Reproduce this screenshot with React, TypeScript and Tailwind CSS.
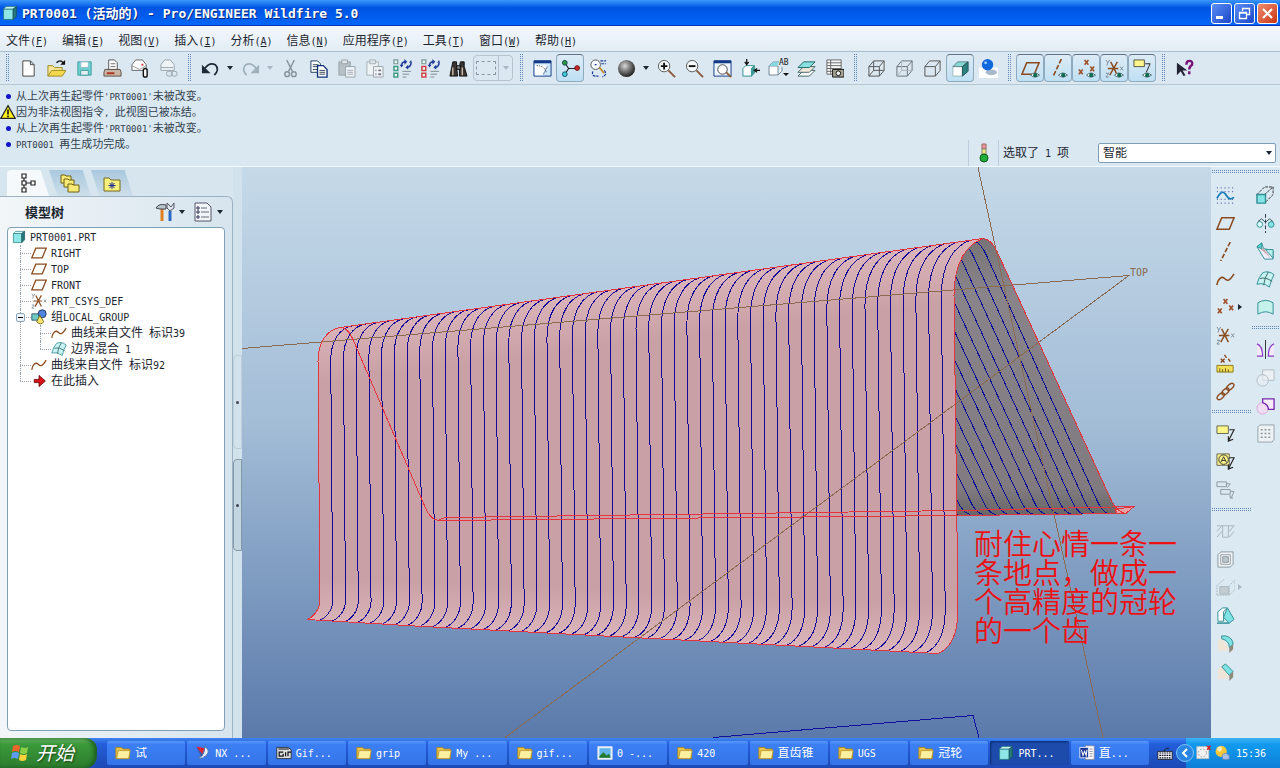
import { Fragment, type ReactNode } from "react"
import clsx from "clsx"

const BROWN = "#8a4a20"
const TEAL = "#2f8f94"

const eye = (
  <>
    <path d="M10 17q4.5-4.5 9.5 0q-5 4-9.5 0z" fill="#fff" stroke="#4a6a6a" />
    <circle cx="15" cy="17" r="2.2" fill="#0d6a52" />
  </>
)
const csys = (
  <>
    <path d="M3 10h11M6 3l7 14M13 3L5 17" stroke={BROWN} strokeWidth="1.5" />
    <path d="M1 1l2 3l2-3M3 4l-1 3M16 8l3 4m0-4l-3 4M1 15h3l-3 4h3" stroke="#7c8a96" />
  </>
)
const crosses = <path d="M8 1l4 5m0-5l-4 5M2 11l4 5m0-5l-4 5M14 8l4 5m0-5l-4 5" stroke="#a05028" strokeWidth="1.7" />
const plane = <path d="M6 4h13l-5 12H1z" stroke={BROWN} strokeWidth="1.6" />
const wave = <path d="M1 16C2 9 6 6 9 9s5 3 10-5" stroke={BROWN} strokeWidth="1.6" />
const regenBoxes = (color: string) => (
  <>
    <path d="M1 1h4v4H1z" fill="#e6f5f2" stroke="#7b9a98" strokeWidth="1.3" />
    <path d="M1 8h4v4H1zM1 15h4v4H1z" fill="#f2fbf9" stroke={color} strokeWidth="1.6" />
    <path d="M10 13h9M10 16h7M10 19h4" stroke="#7d8a92" />
    <path d="M9 7q0-4 4-4M19 4q0 4-4 5" stroke="#1b3a9a" strokeWidth="1.6" />
    <path d="M12 0l3 3l-3 3zM7 6h4l-2 3zM16 6v5l-3-2zM17 4h3l-1-3z" fill="#1b3a9a" />
  </>
)
const magnifier = (
  <>
    <circle cx="7.5" cy="7.5" r="6" fill="#f5fafc" stroke="#555" />
    <path d="M12 12l7 7" stroke="#8a5a3a" strokeWidth="2" />
  </>
)
const wireCube = <path d="M2 8h11v10H2zM7 2h11v10M2 8l5-6M13 8l5-6M13 18l5-6" />
const clipboard = (
  <>
    <path d="M2 3h12v14H2z" fill="#b7c0c6" stroke="#98a2a8" />
    <path d="M5 1h6v4H5z" fill="#dde5ea" stroke="#98a2a8" />
    <path d="M9 8h10v11H9z" fill="#edf3f7" stroke="#98a2a8" />
  </>
)
const noteArrow = <path d="M14 6h5l-6 12M13 13v5l5-2" stroke="#222" strokeWidth="1.2" />

const ICONS: Record<string, ReactNode> = {
  new: <path d="M4 2h8l4 4v12H4zM12 2v4h4" fill="#fff" stroke="#444" />,
  open: (
    <>
      <path d="M1 18V7h5l2 2h8v3" fill="#f6e79a" stroke="#a08a1c" />
      <path d="M1 18l4-6h15l-4 6z" fill="#f4d84e" stroke="#a08a1c" />
      <path d="M10 4q4-4 7 0" stroke="#111" strokeWidth="1.5" />
      <path d="M19 1v5h-5z" fill="#111" />
    </>
  ),
  save: (
    <>
      <path d="M3 3h14v14H3z" fill="#6fd0cf" stroke="#3f9ea2" />
      <path d="M6 3h8v6H6z" fill="#fff" stroke="#8bc" />
      <path d="M6 12h8v5H6z" fill="#e8eff2" stroke="#3f9ea2" />
    </>
  ),
  print: (
    <>
      <path d="M6 11V1h6l3 3v7z" fill="#fff" stroke="#555" />
      <path d="M8 5h5M8 8h5" stroke="#666" />
      <path d="M2 11h16l1 3v4H1v-4z" fill="#c9b5a5" stroke="#5e5048" />
      <path d="M4 15h8" stroke="#b03020" strokeWidth="2" />
    </>
  ),
  mail: (
    <>
      <path d="M1 12V6l4-5h7l4 5v6z" fill="#fff" stroke="#666" />
      <path d="M1 7l8 4l7-4" stroke="#999" />
      <rect x="13" y="10" width="4" height="9" rx="2" fill="#fff" stroke="#111" strokeWidth="1.5" />
      <path d="M11 6h2" stroke="#c33" strokeWidth="2" />
    </>
  ),
  mailLink: (
    <g stroke="#9aa5ac">
      <path d="M2 12V6l4-5h6l4 5v6z" fill="#eef3f6" />
      <path d="M2 9h13" />
      <rect x="8" y="13" width="6" height="5" rx="2" />
      <rect x="13" y="13" width="6" height="5" rx="2" />
    </g>
  ),
  undo: (
    <>
      <path d="M4 10q5-7 11-4q5 5-1 11" stroke="#1d2c38" strokeWidth="1.8" />
      <path d="M1 6v9h9z" fill="#1d2c38" />
    </>
  ),
  redo: (
    <>
      <path d="M16 10q-5-7-11-4q-5 5 1 11" stroke="#9fb0bb" strokeWidth="1.8" />
      <path d="M19 6v9h-9z" fill="#9fb0bb" />
    </>
  ),
  cut: (
    <g stroke="#87929a" strokeWidth="1.5">
      <path d="M6 1l6 12M14 1L8 13" />
      <circle cx="6.500" cy="16" r="2.500" />
      <circle cx="13.500" cy="16" r="2.500" />
    </g>
  ),
  copy: (
    <>
      <path d="M2 2h7l3 3v9H2z" fill="#fff" stroke="#223a60" />
      <path d="M4 6h6M4 8h6M4 11h6" stroke="#345" />
      <path d="M9 7h6l4 4v8H9z" fill="#fff" stroke="#10307a" strokeWidth="1.4" />
      <path d="M11 12h6M11 14h6M11 16h6" stroke="#345" />
    </>
  ),
  paste: (
    <>
      {clipboard}
      <path d="M11 12h6M11 14h6M11 16h6" stroke="#aab" />
    </>
  ),
  pasteSpecial: (
    <>
      <path d="M2 3h12v14H2z" fill="#eef3f6" stroke="#a5afb5" />
      <path d="M5 1h6v4H5z" fill="#dde5ea" stroke="#a5afb5" />
      <path d="M9 8h10v11H9z" fill="#f3f7fa" stroke="#98a2a8" />
      <path d="M11 12h1M14 12h3M11 16h1M14 16h3" stroke="#778" strokeWidth="2" />
    </>
  ),
  regen: regenBoxes("#3f9a86"),
  regenRed: regenBoxes("#cc4444"),
  find: (
    <>
      <path d="M4 3h4v5l1 10H1L3 8zM12 3h4v5l3 10h-8V8z" fill="#3a3430" stroke="#111" />
      <path d="M8 7h4v4H8z" fill="#777" stroke="#111" />
      <path d="M4 9v8M14 9v8" stroke="#c9b9a8" strokeWidth="1.5" />
    </>
  ),
  repaint: (
    <>
      <path d="M1 2h18v16H1z" fill="#cfe6fa" stroke="#123a86" />
      <path d="M1 3h18" stroke="#123a86" strokeWidth="3" />
      <path d="M2 6h13l-5 11H2z" fill="#fff" />
      <path d="M4 7q9 0 10 8M15 8l-4 8" stroke="#234" strokeDasharray="1 1" />
    </>
  ),
  spin: (
    <>
      <path d="M4 4l4 6L4 16M8 10h9" stroke="#222" strokeWidth="1.2" />
      <circle cx="4" cy="4" r="2.500" fill="#2c9a3a" stroke="#145" />
      <circle cx="4" cy="16" r="2.500" fill="#44c9cf" stroke="#157" />
      <circle cx="17" cy="9.500" r="2.500" fill="#d02828" stroke="#611" />
    </>
  ),
  orient: (
    <>
      <circle cx="7" cy="6" r="5" fill="#f5fafc" stroke="#555" />
      <path d="M11 9l5 6" stroke="#c09030" strokeWidth="2" />
      <path d="M12 2h6M13 5h5M4 13q-2 6 6 5M16 12q4 4-2 7M6 6h2" stroke="#1b3a9a" strokeWidth="1.3" strokeDasharray="3 1" />
    </>
  ),
  sphere: <circle cx="10" cy="10" r="9" fill="url(#ball)" />,
  zoomIn: (
    <>
      {magnifier}
      <path d="M4 7.500h7M7.500 4v7" stroke="#111" strokeWidth="2" />
    </>
  ),
  zoomOut: (
    <>
      {magnifier}
      <path d="M4 7.500h7" stroke="#111" strokeWidth="2" />
    </>
  ),
  refit: (
    <>
      <path d="M1 2h18v16H1z" fill="#eef6fc" stroke="#123a86" />
      <path d="M1 3h18" stroke="#123a86" strokeWidth="3" />
      <circle cx="10" cy="11" r="5" fill="#fff" stroke="#444" />
      <path d="M14 14l5 5" stroke="#8a5a3a" strokeWidth="2" />
    </>
  ),
  orientView: (
    <>
      <path d="M2 10l3-3h9l-3 3v8H2zM11 10l3-3v8l-3 3" fill="#fff" stroke={TEAL} />
      <path d="M11 10l3-3v8l-3 3z" fill="#3a9a94" />
      <path d="M6 0v6M4 3l2 3l2-3M20 12h-6M17 10l-3 2l3 2" stroke="#111" strokeWidth="1.3" />
    </>
  ),
  layers: (
    <>
      <path d="M7 12h12l-6 6H1z" fill="#fff" stroke="#466" />
      <path d="M7 8h12l-6 6H1z" fill="#f1e6da" stroke="#466" />
      <path d="M7 3h12l-6 6H1z" fill="#8adfe0" stroke="#266" />
    </>
  ),
  viewManager: (
    <>
      <path d="M2 1h15v15H2zM2 4h15M2 7h15M2 10h15M2 13h15M6 1v15" fill="#f8fafb" stroke="#666" />
      <path d="M8 11h12v8H8z" fill="#a9a493" stroke="#111" />
      <circle cx="14" cy="15" r="2.500" fill="#eee" stroke="#111" />
    </>
  ),
  wireframe: <g stroke="#555">{wireCube}<path d="M2 18l5-6h11M7 12V2" /></g>,
  hidden: <g stroke="#6a7076">{wireCube}<path d="M2 18l5-6h11M7 12V2" stroke="#a9b2b8" /></g>,
  noHidden: <path d="M2 8h11v10H2zM2 8l5-6h11v10l-5 6M13 8l5-6" stroke="#555" />,
  shading: (
    <>
      <path d="M2 8h10v10H2z" fill="#fff" stroke="#9bb" />
      <path d="M2 8l5-5h11l-6 5z" fill="#86d6d2" stroke="#688" />
      <path d="M12 8l6-5v10l-6 5z" fill="#2b817d" stroke="#255" />
    </>
  ),
  realism: (
    <>
      <path d="M0 9h20v11H0z" fill="#fff" />
      <ellipse cx="13" cy="14" rx="6" ry="3" fill="#a9b9cc" />
      <circle cx="9" cy="6" r="6" fill="#0f68dc" />
      <circle cx="7" cy="4" r="1.500" fill="#9fd0ff" />
    </>
  ),
  planeEye: <>{plane}{eye}</>,
  axisEye: <><path d="M13 0L4 19" stroke={BROWN} strokeWidth="1.7" strokeDasharray="5 2" />{eye}</>,
  pointEye: <>{crosses}{eye}</>,
  csysEye: <>{csys}{eye}</>,
  noteEye: (
    <>
      <path d="M1 1h11v7H1z" fill="#fbf58a" stroke="#554" />
      <path d="M13 5h5l-4 9" stroke="#222" />
      {eye}
    </>
  ),
  help: (
    <>
      <path d="M2 4v13l4-4l3 5l2-1l-3-5h5z" fill="#223" />
      <path d="M12 6q0-4 3-4q4 0 3 4q-3 2-3 5M15 13v3" stroke="#7a1478" strokeWidth="2.5" />
    </>
  ),
  sketch: (
    <>
      <path d="M1 2h18M1 6h18M1 14h18M1 18h18" stroke="#223a8a" strokeDasharray="1 3" />
      <path d="M1 13C5 5 8 5 11 10s5 4 8 2" stroke="#1679b8" strokeWidth="1.8" />
    </>
  ),
  plane,
  axis: <path d="M15 0L5 20" stroke={BROWN} strokeWidth="1.7" strokeDasharray="5 2" />,
  curve: wave,
  points: crosses,
  csys,
  fieldPoint: (
    <>
      <path d="M5 5l4 4m0-4l-4 4M9 1l2 3M13 5l2 3" stroke={BROWN} strokeWidth="1.5" />
      <path d="M1 12h17v7H1z" fill="#f3e05a" stroke="#8d7a18" />
      <path d="M4 15v4M7 16v3M10 15v4M13 16v3" stroke="#6b5c10" />
    </>
  ),
  chain: (
    <g stroke={BROWN} strokeWidth="1.5">
      <ellipse cx="5" cy="15" rx="4.500" ry="2.500" transform="rotate(-42 5 15)" />
      <ellipse cx="10" cy="10" rx="4.500" ry="2.500" transform="rotate(-42 10 10)" />
      <ellipse cx="15" cy="5" rx="4.500" ry="2.500" transform="rotate(-42 15 5)" />
    </g>
  ),
  note: <><path d="M1 2h12v8H1z" fill="#fbf58a" stroke="#665" />{noteArrow}</>,
  noteA: (
    <>
      <path d="M1 2h13v12H1z" fill="#fbf58a" stroke="#665" />
      <circle cx="8" cy="8" r="5" stroke="#333" />
      <path d="M5 11l3-6l3 6M6 9h4" stroke="#333" />
      {noteArrow}
    </>
  ),
  noteGray: <path d="M1 2h10v5H1zM5 10h10v5H5zM11 4h4l-3 4M15 12h4l-3 7M15 16v3h3" stroke="#8c979f" />,
  hole: <path d="M1 4h18M7 4v12h6V4M1 10l5-6M1 16l5-6M14 10l5-6M14 16l5-6" stroke="#a9b3ba" />,
  shell: (
    <g stroke="#8c979f">
      <path d="M2 5l3-3h13v13l-3 3H2z" fill="#edf3f5" />
      <path d="M5 5h10v10H5z" fill="#fff" />
      <path d="M7 7h6v6H7z" fill="#bcc7cd" />
    </g>
  ),
  rib: (
    <g stroke="#adb7bd">
      <path d="M1 18V8L9 1M1 18h13l6-6V2L14 8v10" strokeDasharray="2 1" />
      <path d="M4 9h9v8H4z" fill="#c2ccd2" />
    </g>
  ),
  draft: (
    <>
      <path d="M2 6l5-4h5l-4 4v10H2z" fill="#fff" stroke={TEAL} />
      <path d="M8 12l4-10l7 12l-5 4z" fill="#7fe3e6" stroke={TEAL} />
      <path d="M1 18h13" stroke={TEAL} strokeWidth="1.5" />
    </>
  ),
  round: (
    <>
      <path d="M2 7l5-5h4l-4 5q6 2 6 11H2z" fill="#eee5d8" />
      <path d="M6 2h4q8 2 8 9l-4 3q0-7-8-9z" fill="#7fe3e6" stroke={TEAL} />
      <path d="M14 14l4-3v5l-4 4z" fill="#908878" />
    </>
  ),
  chamfer: (
    <>
      <path d="M2 7l5-5h4l2 16H2z" fill="#eee5d8" />
      <path d="M6 5l4-3l8 8l-4 4z" fill="#7fe3e6" stroke={TEAL} />
      <path d="M14 14l4-4v6l-4 4z" fill="#908878" />
    </>
  ),
  extrude: (
    <>
      <path d="M1 9l8-8h9v8l-8 8M9 9l9-8" stroke="#333" strokeDasharray="3 1" />
      <path d="M1 9h9v9H1z" fill="#84e4e6" stroke={TEAL} strokeWidth="1.5" />
    </>
  ),
  revolve: (
    <>
      <path d="M10 0v20" stroke="#234" strokeDasharray="4 2" />
      <circle cx="4" cy="11" r="3" fill="#dff" stroke={TEAL} />
      <circle cx="16" cy="11" r="3" fill="#84e4e6" stroke={TEAL} />
      <path d="M2 8l4-3l4 4l4-4l4 3" stroke="#355" />
    </>
  ),
  sweep: (
    <>
      <path d="M1 5l5-4l2 6l10 2v9H9z" fill="#eef" stroke={TEAL} />
      <path d="M3 6l5 1l8 10z" fill="#c9a9aa" />
      <path d="M1 5l5-4v6z" fill="#4fdccf" stroke={TEAL} />
      <path d="M10 8h8v9z" fill="#b9f1ee" stroke={TEAL} />
    </>
  ),
  blend: (
    <>
      <path d="M7 3q6-3 12 2q-3 5-5 13q-6-5-13-3q2-8 6-12z" fill="#c9f3f3" stroke={TEAL} />
      <path d="M4 9q6-2 13 3M13 2q-4 6-5 14" stroke="#366" />
    </>
  ),
  style: <path d="M2 5q8-5 16 0v12q-8-5-16 0z" fill="#c4f1ea" stroke={TEAL} />,
  mirror: (
    <>
      <path d="M10 0v20" stroke="#333" />
      <path d="M1 4q6 2 6 13H1M19 4q-6 2-6 13h6" fill="#f4e8fb" stroke="#8a3fc0" strokeWidth="1.3" />
    </>
  ),
  merge: (
    <g stroke="#b3bcc3" fill="#eaf0f4">
      <path d="M7 2h12v11H7z" />
      <circle cx="7" cy="13" r="6" fillOpacity=".6" />
    </g>
  ),
  trim: (
    <>
      <circle cx="7" cy="13" r="6" fill="#f0dcf2" stroke="#d9a8dc" />
      <path d="M7 3h12v11h-6q0-5-6-7z" fill="#f6ecfb" stroke="#7a28b0" strokeWidth="1.4" />
    </>
  ),
  pattern: (
    <>
      <path d="M2 3l2-2h15v15l-2 3H2z" fill="#edf2f4" stroke="#98a2a8" />
      <path d="M5 6h11M5 10h11M5 14h11" stroke="#8a959c" strokeWidth="1.5" strokeDasharray="2 2" />
    </>
  ),
  part: (
    <>
      <path d="M2 5h12v13H2z" fill="#8fe6e6" stroke="#2a7d80" />
      <path d="M2 5l3-3h13l-4 3z" fill="#d5fafa" stroke="#2a7d80" />
      <path d="M14 5l4-3v12l-4 4z" fill="#25797c" stroke="#185558" />
    </>
  ),
  group: (
    <>
      <path d="M1 6h10v8H1z" fill="#6fcac4" stroke="#245" />
      <circle cx="14" cy="6" r="5" fill="#4f86dd" stroke="#124" />
      <path d="M11 8l5 8q-4 5-9 0z" fill="#f4e468" stroke="#665510" />
    </>
  ),
  insert: <path d="M4 8h6V3l8 7l-8 7v-5H4z" fill="#d80f18" stroke="#5e0808" />,
  tools: (
    <>
      <path d="M7 6v13" stroke="#e08020" strokeWidth="3" />
      <path d="M1 6q3-5 10-3v4H5z" fill="#b8c6cc" stroke="#445" />
      <path d="M15 9v10" stroke="#2868c8" strokeWidth="3" />
      <path d="M12 1v5l3 3l4-3V1l-3 4z" fill="#dde6ea" stroke="#556" />
    </>
  ),
  settings: (
    <>
      <path d="M2 1h12l4 4v14H2z" fill="#f2f6fa" stroke="#556" />
      <path d="M8 6h6M8 10h8M8 15h8" stroke="#667" />
      <path d="M4 5h2v2H4zM4 9h2v2H4zM4 14h2v2H4z" stroke="#335" />
    </>
  ),
  treeTab: <path d="M4 1h4v4H4zM4 8h4v4H4zM4 15h4v4H4zM13 8h4v4h-4zM6 5v3M6 12v3M8 10h5" stroke="#222" fill="#fff" strokeWidth="1.2" />,
  folders: (
    <g fill="#f7ea76" stroke="#6f6212">
      <path d="M1 2h4l1 1h5v7H1z" />
      <path d="M4 6h4l1 1h5v7H4z" />
      <path d="M8 11h4l1 1h6v7H8z" />
    </g>
  ),
  favorites: (
    <>
      <path d="M2 5h5l2 2h9v11H2z" fill="#f9f07c" stroke="#77691a" />
      <path d="M10 9v7M6.500 12.500h7M7.500 10l5 5M12.500 10l-5 5" stroke="#182a90" />
    </>
  ),
  folder: (
    <>
      <path d="M1 3h7l2 2h8v12H1z" fill="#e9c34a" stroke="#a98318" />
      <path d="M4 7h15l-2 10H2z" fill="#fdf0a0" stroke="#b8922a" />
    </>
  ),
  nx: (
    <>
      <path d="M2 2l10 2l-4 11z" fill="#e02430" />
      <path d="M12 2q8 5 2 11q-5 5-10 3q9-3 8-14z" fill="#e8f0f8" stroke="#4a6a9a" />
      <path d="M2 3l6 12l2-3z" fill="#3060b0" />
    </>
  ),
  gif: (
    <>
      <path d="M1 3h14l4 3v11H1z" fill="#ddd" stroke="#222" />
      <path d="M9 9H4v5h5v-3M12 9v5M15 14V9h4M3 5h13" stroke="#111" strokeWidth="1.5" />
    </>
  ),
  picture: (
    <>
      <path d="M1 2h18v16H1z" fill="#e8f6fa" stroke="#dde" />
      <path d="M3 4h14v12H3z" fill="#62b4ea" />
      <path d="M3 14l5-5l4 4l3-2l2 5H3z" fill="#23782c" />
    </>
  ),
  word: (
    <>
      <path d="M8 1h11v17H8z" fill="#fff" stroke="#889" />
      <path d="M13 5h4M13 8h4M13 11h4M13 14h4" stroke="#778" />
      <path d="M1 3h11v13H1z" fill="#1c3a96" stroke="#fff" />
      <path d="M3 6l2 7l2-5l2 5l1-7" stroke="#fff" strokeWidth="1.3" />
    </>
  ),
  keyboard: (
    <>
      <path d="M1 8h18v10H1z" fill="#eef" stroke="#111" />
      <path d="M3 10h14M3 13h14M3 16h14" stroke="#111" strokeWidth="1.5" strokeDasharray="2 1" />
      <path d="M9 8q0-4 6-4" stroke="#111" />
    </>
  ),
  tray: (
    <>
      <path d="M1 2h15v15H1z" fill="#f2f2f2" stroke="#bbb" />
      <circle cx="8" cy="10" r="5" stroke="#888" strokeDasharray="2 2" />
      <path d="M14 1l4 5M18 1l-4 5" stroke="#d02020" strokeWidth="2" />
    </>
  ),
  messenger: (
    <>
      <circle cx="9" cy="8" r="7" fill="#f7c838" />
      <circle cx="7" cy="5" r="3" fill="#fff" fillOpacity=".7" />
      <path d="M10 13q4-5 9 0v5h-8z" fill="#a9bfe4" stroke="#5a7fc0" />
    </>
  ),
  warning: (
    <>
      <path d="M10 2l9 16H1z" fill="#fdf01c" stroke="#222" strokeWidth="1.5" />
      <path d="M10 7v6M10 14.500v2" stroke="#111" strokeWidth="2" />
    </>
  ),
}

function Icon({ name, className = "size-5" }: { name: string; className?: string }) {
  return (
    <svg viewBox="0 0 20 20" fill="none" className={clsx("shrink-0", className)} aria-hidden="true">
      {ICONS[name]}
    </svg>
  )
}

// Latin runs are set smaller so that they take half the width of a Chinese character
function Mixed({ text, latin = "text-[10px]" }: { text: string; latin?: string }) {
  return (
    <>
      {text.split(/([\x20-\x7e]+)/).map((part, i) => (
        <span key={i} className={clsx("whitespace-pre", i % 2 === 1 && latin)}>
          {part}
        </span>
      ))}
    </>
  )
}

function Caret({ dim }: { dim?: boolean }) {
  return (
    <svg viewBox="0 0 6 4" className={clsx("h-1 w-1.5 shrink-0", dim ? "fill-[#a9b8c4]" : "fill-[#1c2630]")} aria-hidden="true">
      <path d="M0 0h6L3 4z" />
    </svg>
  )
}

function Grip() {
  return (
    <div className="flex w-3.5 shrink-0 justify-center">
      <div className="h-7 w-1 bg-[conic-gradient(#5f86b4_25%,transparent_0)] bg-[size:2px_2px]" />
    </div>
  )
}

function Divider() {
  return (
    <div className="flex h-2.5 items-center">
      <div className="h-1 w-full bg-[conic-gradient(#5f86b4_25%,transparent_0)] bg-[size:2px_2px]" />
    </div>
  )
}

function Tool({ name, label, active }: { name: string; label: string; active?: boolean }) {
  return (
    <button
      title={label}
      aria-label={label}
      className={clsx(
        "flex size-7 shrink-0 items-center justify-center",
        active && "rounded-sm border border-[#8fa9bd] border-t-[#5f7484] bg-linear-to-b from-[#dcebf5] to-[#bfe0f4]"
      )}
    >
      <Icon name={name} className="size-[19px]" />
    </button>
  )
}

function DropButton({ label, dim }: { label: string; dim?: boolean }) {
  return (
    <button aria-label={label} className="flex h-7 w-3 shrink-0 items-center justify-center">
      <Caret dim={dim} />
    </button>
  )
}

function TitleBar() {
  return (
    <header className="flex h-[26px] items-center gap-1 bg-linear-to-b from-[#3a96fb] via-[#0054e3] via-30% to-[#0468fb] px-0.5 shadow-[inset_0_-1px_0_#0038b0]">
      <Icon name="part" className="size-4" />
      <h1 className="flex-1 font-['DejaVu_Sans_Mono','Noto_Sans_CJK_SC',monospace] text-[13px] font-bold text-white [text-shadow:1px_1px_#0a2a80]">
        PRT0001 (活动的) - Pro/ENGINEER Wildfire 5.0
      </h1>
      <div className="flex gap-0.5">
        <button aria-label="最小化" className="size-[21px] rounded-[3px] border border-white bg-linear-to-br from-[#5c8df6] to-[#1b45c8]">
          <svg viewBox="0 0 19 19" aria-hidden="true"><path d="M4 12h7v3H4z" fill="#fff" /></svg>
        </button>
        <button aria-label="还原" className="size-[21px] rounded-[3px] border border-white bg-linear-to-br from-[#5c8df6] to-[#1b45c8]">
          <svg viewBox="0 0 19 19" fill="none" stroke="#fff" aria-hidden="true">
            <path d="M7.500 7V4.500h7v6H12M7 4.500h8M4.500 8.500h7v6h-7zM4 9h8" strokeWidth="1.3" />
          </svg>
        </button>
        <button aria-label="关闭" className="size-[21px] rounded-[3px] border border-white bg-linear-to-br from-[#ee8a6c] to-[#c8320c]">
          <svg viewBox="0 0 19 19" aria-hidden="true"><path d="M5 5l9 9M14 5l-9 9" stroke="#fff" strokeWidth="2" /></svg>
        </button>
      </div>
    </header>
  )
}

const MENUS = [
  ["文件", "F"], ["编辑", "E"], ["视图", "V"], ["插入", "I"], ["分析", "A"],
  ["信息", "N"], ["应用程序", "P"], ["工具", "T"], ["窗口", "W"], ["帮助", "H"],
]

function MenuBar() {
  return (
    <nav className="flex h-[26px] items-center gap-3.5 border-b border-[#a9bfce] bg-linear-to-b from-[#f4f8fd] to-[#e3ecf4] px-1.5 pt-1">
      {MENUS.map(([name, key]) => (
        <button key={name} className="text-[12px] whitespace-nowrap">
          {name}
          <span className="text-[10px]">(<u>{key}</u>)</span>
        </button>
      ))}
    </nav>
  )
}

function Toolbar() {
  return (
    <div className="flex h-[33px] items-center border-b border-[#b4c8d6] bg-[#dbe8f1]">
      <Grip />
      <Tool name="new" label="新建" />
      <Tool name="open" label="打开" />
      <Tool name="save" label="保存" />
      <Tool name="print" label="打印" />
      <Tool name="mail" label="发送邮件" />
      <Tool name="mailLink" label="发送链接" />
      <Grip />
      <Tool name="undo" label="撤消" />
      <DropButton label="撤消列表" />
      <Tool name="redo" label="重做" />
      <DropButton label="重做列表" dim />
      <Tool name="cut" label="剪切" />
      <Tool name="copy" label="复制" />
      <Tool name="paste" label="粘贴" />
      <Tool name="pasteSpecial" label="选择性粘贴" />
      <Tool name="regen" label="再生" />
      <Tool name="regenRed" label="再生管理器" />
      <Tool name="find" label="查找" />
      <button aria-label="选取框" className="mx-px flex h-[26px] w-10 shrink-0 items-center rounded-sm border border-[#b4c3ce]">
        <span className="mx-0.5 h-3.5 w-5 border border-dashed border-[#8997a2]" />
        <span className="flex h-full flex-1 items-center justify-center border-l border-[#b4c3ce]">
          <Caret dim />
        </span>
      </button>
      <Grip />
      <Tool name="repaint" label="重画" />
      <Tool name="spin" label="旋转中心" active />
      <Tool name="orient" label="定向模式" />
      <Tool name="sphere" label="外观库" />
      <DropButton label="外观列表" />
      <Tool name="zoomIn" label="放大" />
      <Tool name="zoomOut" label="缩小" />
      <Tool name="refit" label="重新调整" />
      <Tool name="orientView" label="重定向" />
      <button aria-label="已命名视图" className="flex size-7 shrink-0 items-center justify-center">
        <svg viewBox="0 0 24 20" fill="none" className="h-5 w-6" aria-hidden="true">
          <path d="M3 8h9v9H3zM3 8l4-4h6M12 17l4-4v-4" fill="#fff" stroke="#789" />
          <path d="M3 8l4-4h6l-2 4z" fill="#86d6e2" />
          <text x="13" y="7" fontSize="8" fill="#111">AB</text>
          <path d="M17 15h6l-3 3z" fill="#111" />
        </svg>
      </button>
      <Tool name="layers" label="层" />
      <Tool name="viewManager" label="视图管理器" />
      <Grip />
      <Tool name="wireframe" label="线框" />
      <Tool name="hidden" label="隐藏线" />
      <Tool name="noHidden" label="无隐藏线" />
      <Tool name="shading" label="着色" active />
      <Tool name="realism" label="增强的真实感" />
      <Grip />
      <Tool name="planeEye" label="平面显示" active />
      <Tool name="axisEye" label="轴显示" active />
      <Tool name="pointEye" label="点显示" active />
      <Tool name="csysEye" label="坐标系显示" active />
      <Tool name="noteEye" label="注释显示" active />
      <Grip />
      <Tool name="help" label="上下文帮助" />
    </div>
  )
}

const MESSAGES = [
  { text: "从上次再生起零件'PRT0001'未被改变。" },
  { text: "因为非法视图指令, 此视图已被冻结。", warn: true },
  { text: "从上次再生起零件'PRT0001'未被改变。" },
  { text: "PRT0001 再生成功完成。" },
]

function MessageArea() {
  return (
    <div className="flex h-[82px] items-stretch border-b border-[#f4fafd] bg-[#dae8f2]">
      <ul className="flex-1 pt-[3px]">
        {MESSAGES.map((m, i) => (
          <li key={i} className="flex h-4 items-center text-[11px] text-[#33424e]">
            <span className="flex w-4 shrink-0 justify-center">
              {m.warn ? <Icon name="warning" className="size-4" /> : <span className="size-[5px] rounded-full bg-[#1414c8]" />}
            </span>
            <span><Mixed text={m.text} latin="text-[9px]" /></span>
          </li>
        ))}
      </ul>
      <div className="flex items-center self-end pr-1 text-[12px]">
        <div className="flex h-[26px] w-[31px] items-center justify-center border-x border-[#bccddb]">
          <svg viewBox="0 0 10 20" className="h-5 w-2.5" aria-hidden="true">
            <path d="M3 1h4v5H3z" fill="#e79a98" stroke="#966" />
            <path d="M3 6h4v5H3z" fill="#f3ea8a" stroke="#886" />
            <circle cx="5" cy="15" r="4" fill="#1fae38" stroke="#0b5a1a" />
          </svg>
        </div>
        <span className="w-[99px] pl-1"><Mixed text="选取了 1 项" /></span>
        <div className="relative">
          <select aria-label="过滤器" defaultValue="智能" className="h-5 w-[178px] appearance-none rounded-xs border border-[#7f9db4] bg-white pl-1 text-[12px]">
            <option>智能</option>
          </select>
          <span className="pointer-events-none absolute top-2 right-1"><Caret /></span>
        </div>
      </div>
    </div>
  )
}

interface Node {
  icon: string
  text: string
  children?: Node[]
}

const TREE: Node[] = [
  { icon: "plane", text: "RIGHT" },
  { icon: "plane", text: "TOP" },
  { icon: "plane", text: "FRONT" },
  { icon: "csys", text: "PRT_CSYS_DEF" },
  {
    icon: "group",
    text: "组LOCAL_GROUP",
    children: [
      { icon: "curve", text: "曲线来自文件 标识39" },
      { icon: "blend", text: "边界混合 1" },
    ],
  },
  { icon: "curve", text: "曲线来自文件 标识92" },
  { icon: "insert", text: "在此插入" },
]

function TreeRows({ nodes }: { nodes: Node[] }) {
  return (
    <ul>
      {nodes.map((node, i) => {
        const last = i === nodes.length - 1
        return (
          <li key={i} className="relative">
            <span className={clsx("absolute top-0 left-0 border-l border-dotted border-[#98a0a8]", last ? "h-2" : "h-full")} />
            <div className="flex h-4 items-center">
              <span className="w-[11px] border-t border-dotted border-[#98a0a8]" />
              {node.children && (
                <button aria-label="折叠" className="absolute top-1 -left-1 flex size-[9px] items-center justify-center rounded-xs border border-[#8aa4bc] bg-[#eef4fa]">
                  <span className="h-px w-[5px] bg-black" />
                </button>
              )}
              <Icon name={node.icon} className="size-4" />
              <span className="pl-1"><Mixed text={node.text} /></span>
            </div>
            {node.children && <div className="pl-5"><TreeRows nodes={node.children} /></div>}
          </li>
        )
      })}
    </ul>
  )
}

function ModelTree() {
  return (
    <aside className="flex w-[233px] shrink-0 flex-col">
      <div className="flex h-[29px] items-end pl-[7px]" role="tablist">
        <button role="tab" aria-label="模型树" aria-selected className="flex h-[26px] w-[42px] items-center justify-center rounded-tl-sm bg-[#f6f9fc] [clip-path:polygon(0_0,80%_0,100%_100%,0_100%)]">
          <Icon name="treeTab" className="size-5" />
        </button>
        <button role="tab" aria-label="文件夹浏览器" className="flex h-[26px] w-[42px] items-center justify-center bg-linear-to-b from-[#a9c8de] to-[#cddfea] [clip-path:polygon(0_0,80%_0,100%_100%,20%_100%)]">
          <Icon name="folders" />
        </button>
        <button role="tab" aria-label="收藏夹" className="flex h-[26px] w-[42px] items-center justify-center bg-linear-to-b from-[#a9c8de] to-[#cddfea] [clip-path:polygon(0_0,80%_0,100%_100%,20%_100%)]">
          <Icon name="favorites" />
        </button>
      </div>
      <div className="flex flex-1 flex-col rounded-tr-md border-t border-r border-[#9db3c3] bg-linear-to-r from-[#f2f6f9] to-[#d6e4ed] pr-[7px] pb-[7px] pl-[7px]">
        <div className="flex h-[30px] items-center pr-0.5">
          <h2 className="flex-1 pl-[18px] text-[13px] font-bold">模型树</h2>
          <button aria-label="显示" className="mr-2 flex items-center gap-1"><Icon name="tools" /><Caret /></button>
          <button aria-label="设置" className="flex items-center gap-1"><Icon name="settings" /><Caret /></button>
        </div>
        <div className="flex-1 rounded-sm border border-[#7f9fb4] bg-white pt-px text-[12px]">
          <div className="flex h-4 items-center pl-1">
            <Icon name="part" className="size-3.5" />
            <span className="pl-1"><Mixed text="PRT0001.PRT" /></span>
          </div>
          <div className="pl-3"><TreeRows nodes={TREE} /></div>
        </div>
      </div>
    </aside>
  )
}

function Splitter() {
  return (
    <div className="flex w-[9px] shrink-0 flex-col items-stretch gap-2.5 bg-[#d2e2ec] pt-[188px]">
      <div className="flex h-[94px] items-center justify-center rounded-l-sm border border-[#bccfda]">
        <span className="size-[3px] rounded-full bg-[#445]" />
      </div>
      <div className="flex h-[92px] items-center justify-center rounded-l-sm border border-[#8499a6] bg-[#c3d5e0]">
        <span className="size-[3px] rounded-full bg-[#445]" />
      </div>
    </div>
  )
}

// Section profile at both ends of the tooth flank, as x/y pairs
const LEFT = [340, 328, 327, 330, 318, 343, 318, 362, 320, 601, 320, 610, 313, 618, 307, 620]
const RIGHT = [983, 239, 967, 245, 954, 262, 954, 296, 958, 610, 958, 632, 952, 648, 938, 654]

function section(t: number) {
  const p = LEFT.map((v, i) => v + (RIGHT[i] - v) * t)
  return `M${p[0]} ${p[1]}C${p.slice(2, 8).join(" ")}L${p[8]} ${p[9]}C${p.slice(10).join(" ")}`
}

const FRONT = "M340 328C327 330 318 343 318 362L320 601C320 610 313 618 307 620L423 627L938 654C952 648 958 632 958 610L954 296C954 262 967 245 983 239Z"
const BACK = "M983 239C967 245 954 262 954 296L957 516L1125 514C1117 512 1113 505 1110 498L997 252C994 245 990 240 983 239Z"

function Viewport() {
  return (
    <main className="relative min-w-0 flex-1 bg-linear-to-b from-[#c5d9e8] via-[#a3bdd7] via-45% to-[#5b7aaa]">
      <svg viewBox="242 168 969 570" fill="none" shapeRendering="crispEdges" className="block size-full" role="img" aria-label="PRT0001">
        <defs>
          <radialGradient id="ball" cx=".4" cy=".35" r=".65">
            <stop stopColor="#d8d8d8" />
            <stop offset=".5" stopColor="#777" />
            <stop offset="1" stopColor="#222" />
          </radialGradient>
          <linearGradient id="topLight" gradientUnits="userSpaceOnUse" x1="640" y1="286" x2="647" y2="341">
            <stop stopColor="#dab4b8" />
            <stop offset="1" stopColor="#c9a0a6" />
          </linearGradient>
          <linearGradient id="bottomLight" gradientUnits="userSpaceOnUse" x1="640" y1="592" x2="638" y2="638">
            <stop stopColor="#dab4b8" stopOpacity="0" />
            <stop offset="1" stopColor="#dab4b8" />
          </linearGradient>
          <linearGradient id="inside" x1="0" y1="0" x2="0" y2="1">
            <stop stopColor="#777476" />
            <stop offset=".2" stopColor="#88848a" />
            <stop offset=".9" stopColor="#817b80" />
            <stop offset="1" stopColor="#666668" />
          </linearGradient>
          <clipPath id="backClip"><path d={BACK} /></clipPath>
        </defs>
        <path d={BACK} fill="url(#inside)" />
        <g clipPath="url(#backClip)" stroke="#0c0c9c">
          {Array.from({ length: 13 }, (_, k) => {
            const x = -12.7 * k
            const y = 1.7 * k
            return <path key={k} d={`M${972 + x} ${240 + y}Q${981 + x} ${243 + y} ${987 + x} ${257 + y}L${1097 + x} 501Q${1102 + x} 513 ${1110 + x} 515`} />
          })}
        </g>
        <path d="M1115 510L1134 507L1126 514H1117Z" fill="#e3a5a8" stroke="#e8323c" />
        <path d={FRONT} fill="url(#topLight)" />
        <path d={FRONT} fill="url(#bottomLight)" />
        <g stroke="#14089a">
          {Array.from({ length: 49 }, (_, i) => <path key={i} d={section((i + 1) / 50)} />)}
        </g>
        <g stroke="#8a6a50">
          <path d="M242 349L1129 276L505 738" />
          <path d="M978 168L1103 738" />
        </g>
        <g stroke="#e8323c">
          <path d={FRONT} />
          <path d="M983 239C990 240 994 245 997 252L1110 498C1113 505 1117 512 1125 514" />
          <path d="M340 328Q348 328 353 340L424 505Q430 521 439 521L958 516L1125 514" />
          <path d="M439 521Q442 518 448 518L958 511L1134 507" />
        </g>
        <path d="M713 738L973 716L979 738" stroke="#10109c" />
        <text x="1130" y="276" fontSize="10" fill="#8a6a50">TOP</text>
      </svg>
      <p className="absolute top-[364px] left-[732px] w-[210px] text-[29px] leading-[29px] font-[350] break-all text-[#ee1010]">
        耐住心情一条一条地点，做成一个高精度的冠轮的一个齿
      </p>
    </main>
  )
}

const LEFT_TOOLS = [
  [["sketch", "草绘"], ["plane", "平面"], ["axis", "轴"], ["curve", "曲线"], ["points", "点"], ["csys", "坐标系"], ["fieldPoint", "分析"], ["chain", "参照"]],
  [["note", "注释"], ["noteA", "基准注释"], ["noteGray", "传播"]],
  [["hole", "孔"], ["shell", "壳"], ["rib", "筋"], ["draft", "拔模"], ["round", "倒圆角"], ["chamfer", "倒角"]],
]
const RIGHT_TOOLS = [
  [["extrude", "拉伸"], ["revolve", "旋转"], ["sweep", "扫描"], ["blend", "边界混合"], ["style", "造型"]],
  [["mirror", "镜像"], ["merge", "合并"], ["trim", "修剪"], ["pattern", "阵列"]],
]
const FLYOUTS = ["points", "rib"]

function ToolColumn({ groups }: { groups: string[][][] }) {
  return (
    <div className="flex flex-1 flex-col gap-0.5">
      {groups.map((group, i) => (
        <Fragment key={i}>
          {i > 0 && <Divider />}
          <div>
            {group.map(([name, label]) => (
              <div key={name} className="flex items-center">
                <Tool name={name} label={label} />
                {FLYOUTS.includes(name) && (
                  <span className="-rotate-90 pb-1"><Caret dim={name === "rib"} /></span>
                )}
              </div>
            ))}
          </div>
        </Fragment>
      ))}
    </div>
  )
}

function FeatureBar() {
  return (
    <aside className="w-[69px] shrink-0 bg-[#dbe9f2]">
      <Divider />
      <div className="flex pt-1">
        <div className="flex w-10"><ToolColumn groups={LEFT_TOOLS} /></div>
        <ToolColumn groups={RIGHT_TOOLS} />
      </div>
    </aside>
  )
}

const TASKS = [
  ["folder", "试"], ["nx", "NX ..."], ["gif", "Gif..."], ["folder", "grip"], ["folder", "My ..."],
  ["folder", "gif..."], ["picture", "0 -..."], ["folder", "420"], ["folder", "直齿锥"], ["folder", "UGS"],
  ["folder", "冠轮"], ["part", "PRT..."], ["word", "直..."],
]

function Taskbar() {
  return (
    <footer className="flex h-[30px] items-stretch bg-linear-to-b from-[#3f85f0] via-[#245edb] via-20% to-[#1c49b5] text-[12px] text-white">
      <button className="flex w-[97px] shrink-0 items-center gap-1.5 rounded-r-xl bg-linear-to-b from-[#6cb866] via-[#3b9a3b] via-20% to-[#2c7c2c] pl-2.5 text-[19px] italic shadow-[inset_-3px_0_4px_#1d5c20] [text-shadow:1px_1px_2px_#143c14]">
        <svg viewBox="0 0 20 20" className="size-5" aria-hidden="true">
          <path d="M3 3q4-2 7 0L9 9q-4-2-7 0z" fill="#f0642c" />
          <path d="M11 4q4 2 7 0l-1 6q-4 2-7 0z" fill="#8cd048" />
          <path d="M2 10q4-2 7 0l-1 6q-4-2-7 0z" fill="#5c9cf4" />
          <path d="M10 11q4 2 7 0l-1 6q-4 2-7 0z" fill="#fbd23c" />
        </svg>
        开始
      </button>
      <div className="flex flex-1 items-center gap-0.5 pr-2 pl-2.5">
        {TASKS.map(([icon, label], i) => (
          <button
            key={i}
            className={clsx(
              "flex h-6 min-w-0 flex-1 items-center gap-1 rounded-xs pl-2",
              icon === "part" ? "bg-[#1c4bab] shadow-[inset_1px_1px_2px_#0c2a70]" : "bg-linear-to-b from-[#5a98fb] via-[#3c7ff5] via-15% to-[#3574e8]"
            )}
          >
            <Icon name={icon} className="size-4" />
            <span className="truncate"><Mixed text={label} /></span>
          </button>
        ))}
      </div>
      <div className="flex w-[29px] shrink-0 items-center"><Icon name="keyboard" className="size-4" /></div>
      <div className="relative flex w-[94px] shrink-0 items-center gap-0.5 bg-linear-to-b from-[#3cb4f4] via-[#129bee] via-20% to-[#0e7fd8] pl-2.5">
        <button aria-label="显示隐藏的图标" className="absolute top-1.5 -left-2.5 flex size-[18px] items-center justify-center rounded-full border border-[#7cc4fa] bg-[#2a86e0]">
          <svg viewBox="0 0 10 10" fill="none" className="size-2.5" aria-hidden="true"><path d="M7 1L3 5l4 4" stroke="#fff" strokeWidth="2" /></svg>
        </button>
        <Icon name="tray" className="size-4" />
        <Icon name="messenger" className="size-4" />
        <span className="pl-1"><Mixed text="15:36" /></span>
      </div>
    </footer>
  )
}

export default function App() {
  return (
    <div className="flex h-screen flex-col overflow-hidden bg-[#d6e5ee] font-['DejaVu_Sans_Mono','Noto_Sans_CJK_SC',monospace] leading-none text-[#1c2630]">
      <TitleBar />
      <MenuBar />
      <Toolbar />
      <MessageArea />
      <div className="flex min-h-0 flex-1">
        <ModelTree />
        <Splitter />
        <Viewport />
        <FeatureBar />
      </div>
      <Taskbar />
    </div>
  )
}
